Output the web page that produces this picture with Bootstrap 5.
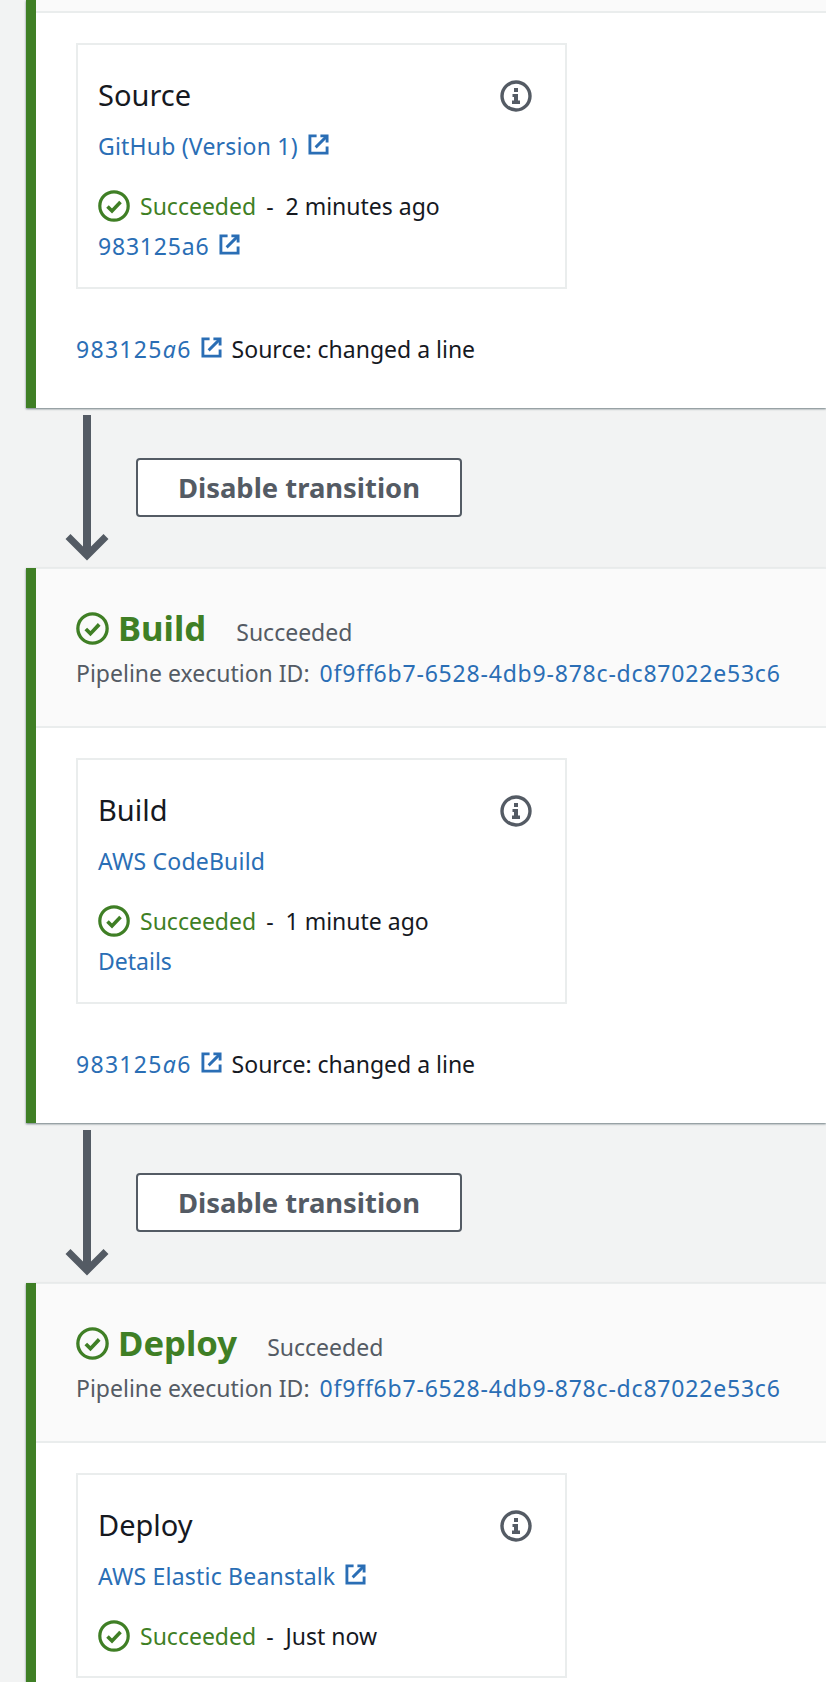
<!DOCTYPE html>
<html lang="en">
<head>
    <meta charset="UTF-8">
    <meta name="viewport" content="width=device-width, initial-scale=1.0">
    <title>Pipeline</title>
    <link rel="stylesheet" href="https://cdn.jsdelivr.net/npm/bootstrap@5.3.0/dist/css/bootstrap.min.css">
    <style>
        html, body { height: 100%; overflow: hidden; }
        body {
            background-color: #f2f3f3;
            font-family: "Noto Sans", sans-serif;
            font-size: 23px;
            line-height: 30px;
            color: #16191f;
            padding-left: 26px;
        }
        a { color: #2a6eb5; text-decoration: none; }
        .stage-panel {
            background: #fff;
            border-left: 10px solid #3f7f25;
            box-shadow: 0 1px 2px rgba(0, 28, 36, .55);
        }
        .stage-head {
            background: #fafafa;
            border-top: 1px solid #eaeded;
            border-bottom: 2px solid #eaeded;
            height: 160px;
            padding: 39px 0 0 40px;
        }
        .stage-head.cut { height: 13px; padding: 0; border-top: 0; }
        .stage-name { font-size: 34.7px; line-height: 40px; font-weight: 700; color: #3f7f25; }
        .stage-state { color: #545b64; margin-left: 30px; margin-top: 8px; }
        .exec-line { color: #545b64; margin-top: 10px; }
        .exec-id { margin-left: 10px; }
        .hash-link { letter-spacing: .8px; }
        .commit-hash { letter-spacing: 1.3px; }
        .commit-hash .ext { margin-left: 9px; }
        .stage-body { padding: 30px 0 44px 40px; }
        .stage-body.last-stage { padding-bottom: 4px; }
        .action-box {
            width: 491px;
            border: 2px solid #eaeded;
            padding: 31px 20px 24px 20px;
            position: relative;
        }
        .action-name { font-size: 29px; line-height: 38px; }
        .action-link { margin-top: 17px; letter-spacing: .2px; }
        .action-status { margin-top: 29px; }
        .action-extra { margin: 9px 0 2px; }
        .ok-text { color: #3f7f25; }
        .time-text { margin-left: 10px; }
        .info-btn { position: absolute; top: 35px; right: 33px; width: 32px; height: 32px; }
        .ext { width: 21px; height: 21px; margin-left: 10px; vertical-align: 0; }
        .ok-icon { width: 32px; height: 32px; margin-right: 10px; flex-shrink: 0; }
        .ok-big { width: 33px; height: 33px; margin-right: 9px; }
        .commit-row { margin-top: 45px; }
        .commit-msg { margin-left: 10px; }
        .gap-row { height: 160px; }
        .flow-arrow { width: 46px; height: 148px; margin: 7px 0 0 38px; }
        .btn.toggle-btn {
            width: 326px;
            height: 59px;
            margin: 50px 0 0 26px;
            background: #fff;
            border: 2px solid #545b64;
            border-radius: 4px;
            color: #545b64;
            font-size: 27.4px;
            font-weight: 700;
            line-height: 1;
            padding: 0;
        }
    </style>
</head>
<body>
    <svg width="0" height="0" class="position-absolute">
        <symbol id="i-ext" viewBox="0 0 22 22">
            <path d="M9 2H2v18h18v-7" fill="none" stroke="#2a6eb5" stroke-width="3"/>
            <path d="M13 2h7v7" fill="none" stroke="#2a6eb5" stroke-width="3"/>
            <path d="M19.500 2.500 8 14" fill="none" stroke="#2a6eb5" stroke-width="3"/>
        </symbol>
        <symbol id="i-ok" viewBox="0 0 32 32">
            <circle cx="16" cy="16" r="14.200" fill="none" stroke="#3f7f25" stroke-width="3.200"/>
            <path d="M9.500 16.500l4.500 4.500 8.500-9" fill="none" stroke="#3f7f25" stroke-width="3.600"/>
        </symbol>
        <symbol id="i-info" viewBox="0 0 32 32">
            <circle cx="16" cy="16" r="14" fill="none" stroke="#545b64" stroke-width="3.400"/>
            <path d="M14 8h4v4h-4zM12.500 14H18v6.500h2V24h-8v-3.500h2V17h-1.500z" fill="#545b64"/>
        </symbol>
        <symbol id="i-arrow" viewBox="0 0 46 148">
            <path d="M23 0v139" fill="none" stroke="#545b64" stroke-width="8"/>
            <path d="M4 121.500L23 140.500l19-19" fill="none" stroke="#545b64" stroke-width="7"/>
        </symbol>
    </svg>

    <!-- source stage, header scrolled off the top -->
    <section class="stage-panel">
        <div class="stage-head cut"></div>
        <div class="stage-body">
            <div class="action-box">
                <div class="action-name">Source</div>
                <svg class="info-btn"><use href="#i-info"/></svg>
                <div class="action-link"><a href="#">GitHub (Version 1)<svg class="ext"><use href="#i-ext"/></svg></a></div>
                <div class="action-status d-flex align-items-center"><svg class="ok-icon"><use href="#i-ok"/></svg><span class="ok-text">Succeeded</span><span class="time-text">-&nbsp; 2 minutes ago</span></div>
                <div class="action-extra"><a href="#" class="hash-link">983125a6<svg class="ext"><use href="#i-ext"/></svg></a></div>
            </div>
            <div class="commit-row"><a href="#" class="commit-hash">983125<i>a</i>6<svg class="ext"><use href="#i-ext"/></svg></a><span class="commit-msg">Source: changed a line</span></div>
        </div>
    </section>

    <div class="gap-row d-flex align-items-start">
        <svg class="flow-arrow"><use href="#i-arrow"/></svg>
        <button type="button" class="btn toggle-btn">Disable transition</button>
    </div>

    <section class="stage-panel">
        <div class="stage-head">
            <div class="d-flex align-items-center"><svg class="ok-big"><use href="#i-ok"/></svg><span class="stage-name">Build</span><span class="stage-state">Succeeded</span></div>
            <div class="exec-line">Pipeline execution ID:<a href="#" class="hash-link exec-id">0f9ff6b7-6528-4db9-878c-dc87022e53c6</a></div>
        </div>
        <div class="stage-body">
            <div class="action-box">
                <div class="action-name">Build</div>
                <svg class="info-btn"><use href="#i-info"/></svg>
                <div class="action-link"><a href="#">AWS CodeBuild</a></div>
                <div class="action-status d-flex align-items-center"><svg class="ok-icon"><use href="#i-ok"/></svg><span class="ok-text">Succeeded</span><span class="time-text">-&nbsp; 1 minute ago</span></div>
                <div class="action-extra"><a href="#">Details</a></div>
            </div>
            <div class="commit-row"><a href="#" class="commit-hash">983125<i>a</i>6<svg class="ext"><use href="#i-ext"/></svg></a><span class="commit-msg">Source: changed a line</span></div>
        </div>
    </section>

    <div class="gap-row d-flex align-items-start">
        <svg class="flow-arrow"><use href="#i-arrow"/></svg>
        <button type="button" class="btn toggle-btn">Disable transition</button>
    </div>

    <section class="stage-panel">
        <div class="stage-head">
            <div class="d-flex align-items-center"><svg class="ok-big"><use href="#i-ok"/></svg><span class="stage-name">Deploy</span><span class="stage-state">Succeeded</span></div>
            <div class="exec-line">Pipeline execution ID:<a href="#" class="hash-link exec-id">0f9ff6b7-6528-4db9-878c-dc87022e53c6</a></div>
        </div>
        <div class="stage-body last-stage">
            <div class="action-box">
                <div class="action-name">Deploy</div>
                <svg class="info-btn"><use href="#i-info"/></svg>
                <div class="action-link"><a href="#">AWS Elastic Beanstalk<svg class="ext"><use href="#i-ext"/></svg></a></div>
                <div class="action-status d-flex align-items-center"><svg class="ok-icon"><use href="#i-ok"/></svg><span class="ok-text">Succeeded</span><span class="time-text">-&nbsp; Just now</span></div>
            </div>
        </div>
    </section>

    <script src="https://cdn.jsdelivr.net/npm/bootstrap@5.3.0/dist/js/bootstrap.bundle.min.js"></script>
</body>
</html>
